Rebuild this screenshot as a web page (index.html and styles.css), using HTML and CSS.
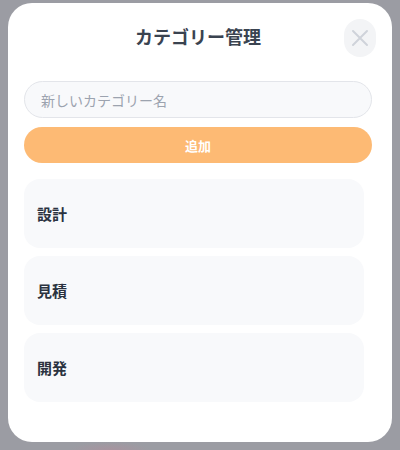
FILE: index.html
```html
<!DOCTYPE html>
<html lang="ja">
<head>
<meta charset="utf-8">
<link rel="stylesheet" href="styles.css">
</head>
<body>
<div class="backdrop">
  <div class="modal">
    <div class="header">
      <h2 class="title">カテゴリー管理</h2>
      <button class="close" aria-label="閉じる">
        <svg width="18" height="18" viewBox="0 0 18 18"><path d="M2 2 L16 16 M16 2 L2 16" stroke="#cfd3da" stroke-width="2" stroke-linecap="round" fill="none"/></svg>
      </button>
    </div>
    <div class="form">
      <input class="field" type="text" placeholder="新しいカテゴリー名">
      <button class="add">追加</button>
    </div>
    <ul class="list">
      <li class="item">設計</li>
      <li class="item">見積</li>
      <li class="item">開発</li>
    </ul>
  </div>
</div>
</body>
</html>
```

FILE: styles.css
```css
* { box-sizing: border-box; }
html, body { margin: 0; padding: 0; }
body {
  width: 400px;
  height: 450px;
  overflow: hidden;
  background: #9b9ca3;
  font-family: "Noto Sans CJK JP", "Noto Sans", sans-serif;
}
.backdrop {
  height: 450px;
  padding: 3px 8px 0 8px;
  background: radial-gradient(ellipse 40px 8px at 110px 450px, #a8949f 0%, rgba(168,148,159,0) 100%), #9b9ca3;
}
.modal {
  background: #ffffff;
  border-radius: 24px;
  height: 439px;
  padding: 16px 20px 0 16px;
  display: flex;
  flex-direction: column;
}
.header {
  position: relative;
  height: 38px;
  padding-bottom: 5px;
  display: flex;
  align-items: center;
  justify-content: center;
}
.title {
  margin: 0;
  font-size: 18px;
  font-weight: 700;
  color: #3a4350;
  line-height: 1;
}
.close {
  position: absolute;
  right: -4px;
  top: 0;
  width: 32px;
  height: 38px;
  border: none;
  border-radius: 16px;
  background: #f3f4f6;
  display: flex;
  align-items: center;
  justify-content: center;
  padding: 0;
}
.form {
  margin-top: 24px;
  display: flex;
  flex-direction: column;
  gap: 9px;
}
.field {
  height: 37px;
  border: 1px solid #e3e5ea;
  border-radius: 999px;
  background: #f8f9fb;
  padding: 0 16px;
  font-family: inherit;
  font-size: 14px;
  color: #374151;
  outline: none;
}
.field::placeholder { color: #9ca3af; }
.add {
  height: 36px;
  border: none;
  border-radius: 999px;
  background: #fdba74;
  color: #ffffff;
  font-family: inherit;
  font-size: 13px;
  font-weight: 700;
}
.list {
  list-style: none;
  margin: 16px 8px 0 0;
  padding: 0;
  display: flex;
  flex-direction: column;
  gap: 8px;
}
.item {
  height: 69px;
  border-radius: 16px;
  background: #f8f9fb;
  padding: 0 13px;
  display: flex;
  align-items: center;
  font-size: 15px;
  font-weight: 700;
  color: #2b3340;
}
```
